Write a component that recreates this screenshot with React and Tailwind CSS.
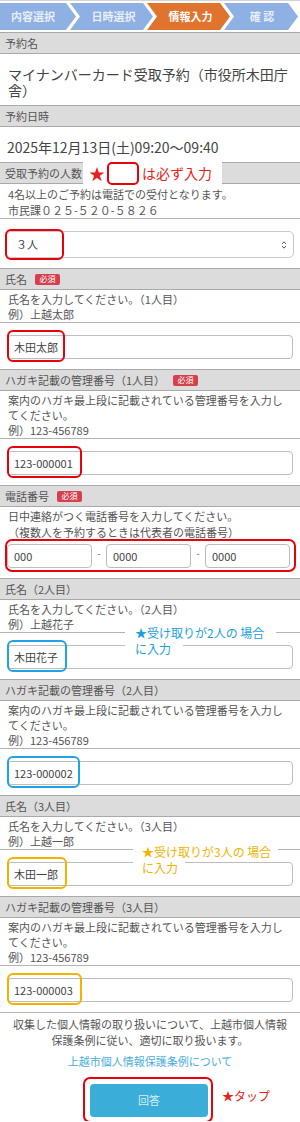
import React from "react";

function Head({ children, req, className = "" }) {
  return (
    <div
      className={
        "relative flex items-center h-[22px] bg-[#dcdcdc] border-y border-[#a9a9a9] pl-[5px] text-[11px] leading-none text-[#555] " +
        className
      }
    >
      <span>{children}</span>
      {req && (
        <span className="ml-[8px] inline-flex items-center justify-center h-[11px] w-[25px] rounded-[2px] bg-[#d6404c] text-white text-[8px] leading-none">
          必須
        </span>
      )}
    </div>
  );
}

function Desc({ children, className = "" }) {
  return (
    <div
      className={
        "px-[8px] pt-[2px] text-[11px] leading-[15px] text-[#555] border-b border-[#b3b3b3] " +
        className
      }
    >
      {children}
    </div>
  );
}

function Field({ value, boxClass, annot, className = "" }) {
  return (
    <div className={"relative px-[7px] pt-[12px] pb-[10px] " + className}>
      {annot}
      <div className="relative">
        <input
          readOnly
          value={value}
          className="block w-full h-[24px] border border-[#bdbdbd] rounded-[4px] bg-white px-[6px] text-[11px] text-[#444] outline-none"
        />
        <div className={"absolute left-0 -top-[5px] h-[32px] border-2 rounded-[6px] " + boxClass}></div>
      </div>
    </div>
  );
}

export default function App() {
  return (
    <div className="w-[300px] bg-white font-['Noto_Sans_CJK_JP',sans-serif] text-[#555] border-t border-[#d4d4d4] pt-[2px] overflow-hidden">
      {/* step bar */}
      <div className="flex h-[27px] mb-[2px] text-[11px] font-bold leading-none">
        <div className="w-[76px] shrink-0 bg-[#8eb0e2] text-[#e8eef9] flex items-center justify-center pr-[10px] [clip-path:polygon(0_0,calc(100%_-_10px)_0,100%_50%,calc(100%_-_10px)_100%,0_100%)]">
          内容選択
        </div>
        <div className="w-[83px] shrink-0 -ml-[6px] bg-[#8eb0e2] text-[#e8eef9] flex items-center justify-center pl-[12px] pr-[8px] [clip-path:polygon(0_0,calc(100%_-_10px)_0,100%_50%,calc(100%_-_10px)_100%,0_100%,10px_50%)]">
          日時選択
        </div>
        <div className="w-[83px] shrink-0 -ml-[6px] bg-[#e0742f] text-white flex items-center justify-center pl-[12px] pr-[8px] [clip-path:polygon(0_0,calc(100%_-_10px)_0,100%_50%,calc(100%_-_10px)_100%,0_100%,10px_50%)]">
          情報入力
        </div>
        <div className="w-[74px] shrink-0 -ml-[6px] bg-[#8eb0e2] text-[#e8eef9] flex items-center justify-center pl-[10px] pr-[8px] [clip-path:polygon(0_0,calc(100%_-_10px)_0,100%_50%,calc(100%_-_10px)_100%,0_100%,10px_50%)]">
          確&nbsp;認
        </div>
      </div>

      <Head>予約名</Head>
      <div className="px-[8px] pt-[12px] pb-[7px] text-[14px] leading-[16px] text-[#444]">
        マイナンバーカード受取予約（市役所木田庁舎）
      </div>

      <Head>予約日時</Head>
      <div className="px-[7px] pt-[10px] pb-[5px] text-[14px] leading-[20px] text-[#444]">
        2025年12月13日(土)09:20～09:40
      </div>

      <Head>
        受取予約の人数
        <div className="absolute left-[83px] -top-[3px] w-[139px] h-[26px] bg-white flex items-center">
          <span className="ml-[6px] text-[16px] leading-none text-[#e8221b]">★</span>
          <span className="ml-[2px] w-[32px] h-[23px] border-2 border-[#e8000b] rounded-[5px]"></span>
          <span className="ml-[3px] text-[14px] leading-none text-[#e8221b]">は必ず入力</span>
        </div>
      </Head>
      <div className="px-[8px] pt-[2px] text-[11px] leading-[16px] text-[#555] border-b border-[#b3b3b3]">
        <div>4名以上のご予約は電話での受付となります。</div>
        <div>市民課０２５-５２０-５８２６</div>
      </div>
      <div className="px-[6px] pt-[12px] pb-[10px]">
        <div className="relative">
          <select
            defaultValue="3"
            className="block w-full h-[27px] appearance-none border border-[#c9c9c9] rounded-[5px] bg-white pl-[9px] text-[11px] text-[#444] outline-none"
          >
            <option value="1">１人</option>
            <option value="2">２人</option>
            <option value="3">３人</option>
          </select>
          <svg className="absolute right-[7px] top-[9px] pointer-events-none" width="6" height="10" viewBox="0 0 6 10" fill="none">
            <path d="M1 4L3 1.8L5 4" stroke="#555" strokeWidth="1" />
            <path d="M1 6L3 8.2L5 6" stroke="#555" strokeWidth="1" />
          </svg>
          <div className="absolute -left-[1px] -top-[2px] w-[59px] h-[31px] border-2 border-[#e8000b] rounded-[6px]"></div>
        </div>
      </div>

      <Head req>氏名</Head>
      <Desc>
        <div>氏名を入力してください。（1人目）</div>
        <div>例）上越太郎</div>
      </Desc>
      <Field value="木田太郎" boxClass="w-[58px] border-[#e8000b]" />

      <Head req>ハガキ記載の管理番号（1人目）</Head>
      <Desc>
        <div>案内のハガキ最上段に記載されている管理番号を入力してください。</div>
        <div>例）123-456789</div>
      </Desc>
      <Field value="123-000001" boxClass="w-[75px] border-[#e8000b]" />

      <Head req>電話番号</Head>
      <div className="px-[8px] pt-[1px] text-[11px] leading-[16px] text-[#555]">
        <div>日中連絡がつく電話番号を入力してください。</div>
        <div>（複数人を予約するときは代表者の電話番号）</div>
      </div>
      <div className="px-[7px] pt-[4px] pb-[10px]">
        <div className="relative flex items-center">
          <input readOnly value="000" className="block w-[85px] h-[24px] border border-[#bdbdbd] rounded-[4px] bg-white px-[6px] text-[11px] text-[#444] outline-none" />
          <span className="w-[14px] text-center text-[9px] leading-none text-[#666] -mt-[6px]">-</span>
          <input readOnly value="0000" className="block w-[85px] h-[24px] border border-[#bdbdbd] rounded-[4px] bg-white px-[6px] text-[11px] text-[#444] outline-none" />
          <span className="w-[14px] text-center text-[9px] leading-none text-[#666] -mt-[6px]">-</span>
          <input readOnly value="0000" className="block w-[85px] h-[24px] border border-[#bdbdbd] rounded-[4px] bg-white px-[6px] text-[11px] text-[#444] outline-none" />
          <div className="absolute -left-[2px] -right-[3px] -top-[5px] -bottom-[4px] border-2 border-[#e8000b] rounded-[7px]"></div>
        </div>
      </div>

      <Head>氏名（2人目）</Head>
      <Desc>
        <div>氏名を入力してください。（2人目）</div>
        <div>例）上越花子</div>
      </Desc>
      <Field
        value="木田花子"
        boxClass="w-[60px] border-[#1ea3e4]"
        annot={
          <div className="absolute left-[125px] -top-[8px] z-10 w-[160px] text-[12px] leading-[16px] text-[#1a9fe0]">
            <span className="bg-white pl-[10px] pr-[12px] [box-decoration-break:clone]">
              ★受け取りが2人の 場合
              <br />
              に入力
            </span>
          </div>
        }
      />

      <Head>ハガキ記載の管理番号（2人目）</Head>
      <Desc>
        <div>案内のハガキ最上段に記載されている管理番号を入力してください。</div>
        <div>例）123-456789</div>
      </Desc>
      <Field value="123-000002" boxClass="w-[73px] border-[#1ea3e4]" />

      <Head>氏名（3人目）</Head>
      <Desc>
        <div>氏名を入力してください。（3人目）</div>
        <div>例）上越一郎</div>
      </Desc>
      <Field
        value="木田一郎"
        boxClass="w-[60px] border-[#f3b200]"
        annot={
          <div className="absolute left-[133px] -top-[6px] z-10 w-[160px] text-[12px] leading-[16px] text-[#f2b200]">
            <span className="bg-white pl-[9px] pr-[7px] [box-decoration-break:clone]">
              ★受け取りが3人の 場合
              <br />
              に入力
            </span>
          </div>
        }
      />

      <Head>ハガキ記載の管理番号（3人目）</Head>
      <Desc>
        <div>案内のハガキ最上段に記載されている管理番号を入力してください。</div>
        <div>例）123-456789</div>
      </Desc>
      <Field value="123-000003" boxClass="w-[75px] border-[#f3b200]" className="border-b border-[#b3b3b3]" />

      <div className="px-[10px] pt-[3px] text-center text-[11px] leading-[16px] text-[#555]">
        収集した個人情報の取り扱いについて、上越市個人情報保護条例に従い、適切に取り扱います。
      </div>
      <div className="mt-[5px] text-center text-[11px] leading-[16px] text-[#4aaed9]">
        上越市個人情報保護条例について
      </div>
      <div className="mt-[15px] flex justify-center pb-[4px]">
        <div className="relative ml-[-2px]">
          <button className="block w-[118px] h-[33px] rounded-[4px] bg-[#3aaed8] text-[11px] text-[#d4ecf6]">
            回答
          </button>
          <div className="absolute -left-[7px] -right-[5px] -top-[7px] -bottom-[6px] border-[2.5px] border-[#e8000b] rounded-[7px]"></div>
          <div className="absolute left-[132px] top-[6px] whitespace-nowrap text-[12px] leading-none text-[#e8221b]">
            ★タップ
          </div>
        </div>
      </div>
    </div>
  );
}
